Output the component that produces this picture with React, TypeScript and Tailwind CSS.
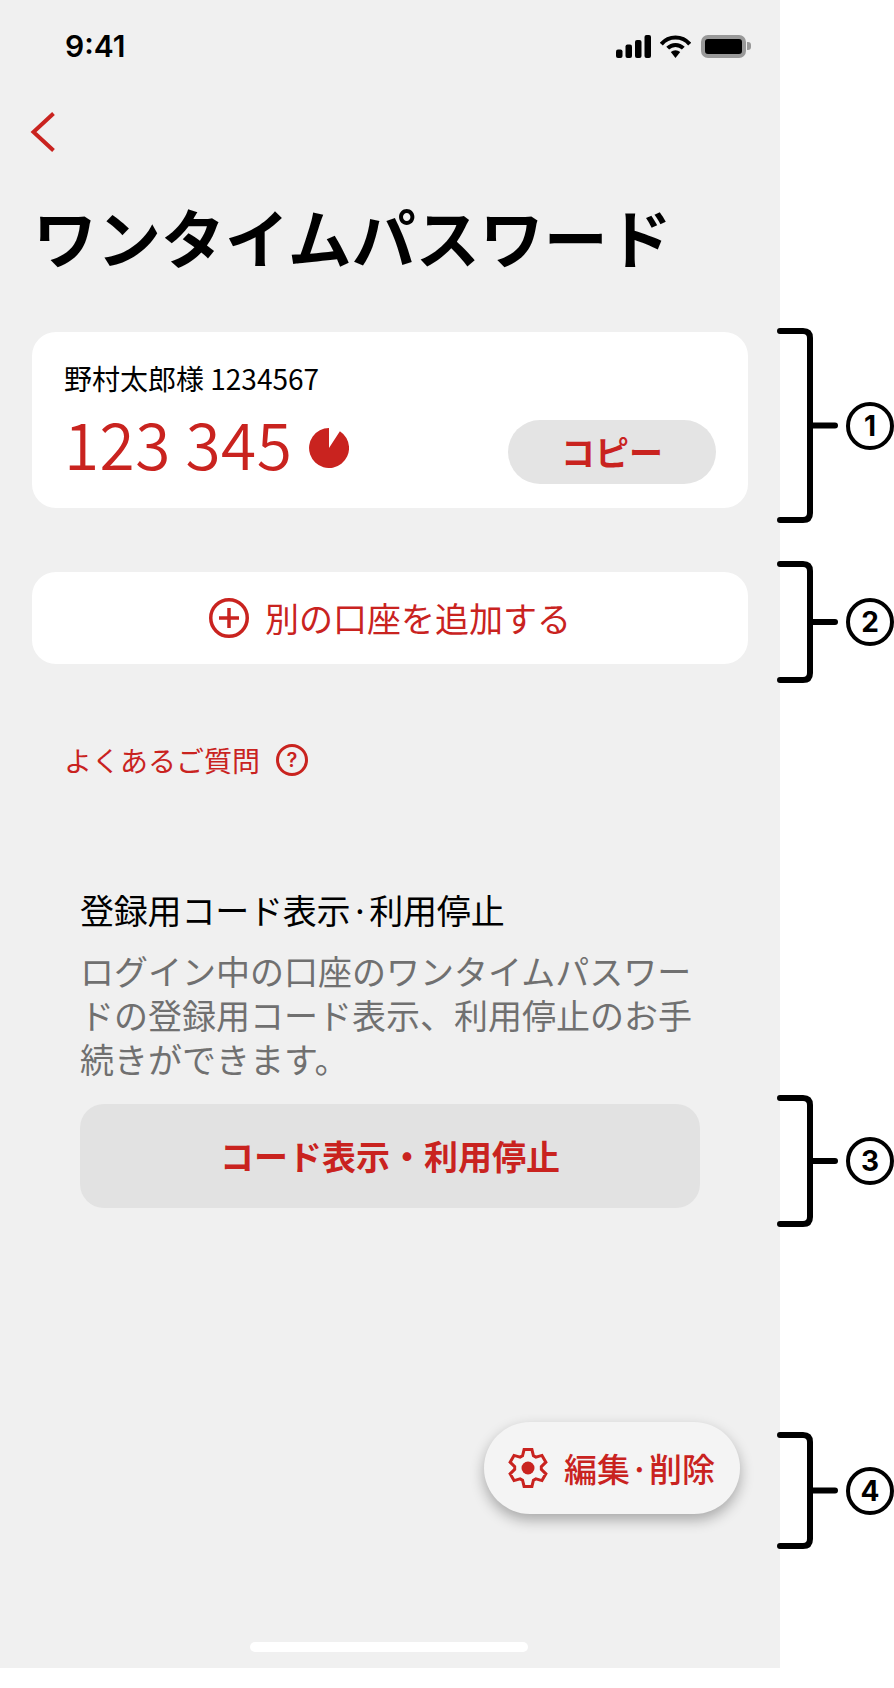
import React from "react"

const gearPath = (() => {
  const pts: string[] = []
  for (let k = 0; k < 6; k++) {
    const a = (k * 60 - 90) * (Math.PI / 180)
    const add = (offset: number, r: number) => {
      const t = a + offset * (Math.PI / 180)
      pts.push(`${(20 + r * Math.cos(t)).toFixed(2)},${(20 + r * Math.sin(t)).toFixed(2)}`)
    }
    add(-24, 13.4)
    add(-12, 18.8)
    add(12, 18.8)
    add(24, 13.4)
  }
  return pts.join(" ")
})()

function StatusIcons() {
  return (
    <div className="flex items-center">
      <svg width="35" height="23" viewBox="0 0 35 23" className="mr-[9px]" fill="#000">
        <rect x="0" y="14.5" width="6.5" height="8.5" rx="2" />
        <rect x="9.5" y="9.5" width="6.5" height="13.5" rx="2" />
        <rect x="19" y="5" width="6.5" height="18" rx="2" />
        <rect x="28.5" y="0" width="6.5" height="23" rx="2" />
      </svg>
      <svg width="31" height="23" viewBox="0 0 31 23" className="mr-[10px]" fill="none">
        <path d="M1.3 9.1 A18.5 18.5 0 0 1 29.7 9.1" stroke="#000" strokeWidth="4" />
        <path d="M7.7 13.2 A11 11 0 0 1 23.3 13.2" stroke="#000" strokeWidth="4" />
        <path d="M15.5 23 L10.8 17 A7 7 0 0 1 20.2 17 Z" fill="#000" />
      </svg>
      <div className="w-[45px] h-[23px] rounded-[7px] border-[4px] border-[#999999] bg-black" />
      <div className="w-[4px] h-[8px] ml-[1px] rounded-r-[3px] bg-[#999999]" />
    </div>
  )
}

function Callout({ num, className, height }: { num: number; className: string; height: number }) {
  const mid = height / 2
  return (
    <div className={`absolute left-[777px] w-[117px] flex items-center ${className}`} style={{ height }}>
      <svg width="62" height={height} viewBox={`0 0 62 ${height}`} fill="none" className="shrink-0">
        <path
          d={`M3 3 H26 Q33 3 33 10 V${height - 10} Q33 ${height - 3} 26 ${height - 3} H3`}
          stroke="#000"
          strokeWidth="6"
          strokeLinecap="round"
        />
        <path d={`M33 ${mid} H58`} stroke="#000" strokeWidth="6" strokeLinecap="round" />
      </svg>
      <div className="ml-[7px] w-[48px] h-[48px] shrink-0 rounded-full border-[4px] border-black flex items-center justify-center text-[28px] leading-none font-bold text-black font-['Inter',sans-serif]">
        {num}
      </div>
    </div>
  )
}

export default function App() {
  return (
    <div className="relative w-[894px] h-[1688px] bg-white font-['Noto_Sans_CJK_JP','Noto_Sans',sans-serif]">
      <div className="relative w-[780px] h-[1668px] bg-[#f0f0f0] flex flex-col">
        {/* Status bar */}
        <div className="h-[92px] pl-[65px] pr-[29px] flex items-center justify-between">
          <span className="text-[30px] leading-none font-semibold text-black font-['Inter',sans-serif]">9:41</span>
          <StatusIcons />
        </div>

        {/* Back */}
        <div className="mt-[19px] ml-[30px] h-[42px]">
          <svg width="26" height="42" viewBox="0 0 26 42" fill="none">
            <path d="M23.5 2.5 L3.5 21 L23.5 39.5" stroke="#c9231f" strokeWidth="4" />
          </svg>
        </div>

        <h1 className="mt-[42px] ml-[33px] text-[64px] leading-[80px] font-bold text-black">ワンタイムパスワード</h1>

        {/* Account card */}
        <div className="mt-[57px] mx-[32px] h-[176px] rounded-[24px] bg-white pt-[26px] px-[32px]">
          <div className="text-[28px] leading-[40px] text-black">野村太郎様 1234567</div>
          <div className="mt-[22px] flex items-center justify-between">
            <div className="flex items-center">
              <span className="text-[64px] leading-[64px] -mt-[20px] font-[350] tracking-[0.45px] text-[#c9231f]">123 345</span>
              <svg width="40" height="40" viewBox="0 0 40 40" className="ml-[17px] -mt-[8px]">
                <path d="M20 20 L20 0 A20 20 0 1 0 30.9 3.2 Z" fill="#c9231f" />
              </svg>
            </div>
            <button className="w-[208px] h-[64px] rounded-full bg-[#e4e4e4] text-[34px] leading-none font-bold text-[#c9231f]">
              コピー
            </button>
          </div>
        </div>

        {/* Add account */}
        <div className="mt-[64px] mx-[32px] h-[92px] rounded-[24px] bg-white flex items-center justify-center">
          <svg width="40" height="40" viewBox="0 0 40 40" fill="none" stroke="#c9231f" strokeWidth="3.5">
            <circle cx="20" cy="20" r="18.25" />
            <path d="M20 10 V30 M10 20 H30" />
          </svg>
          <span className="ml-[16px] text-[34px] leading-[40px] text-[#c9231f]">別の口座を追加する</span>
        </div>

        {/* FAQ */}
        <div className="mt-[76px] ml-[64px] h-[40px] flex items-center">
          <span className="text-[28px] leading-[40px] text-[#c9231f]">よくあるご質問</span>
          <svg width="32" height="32" viewBox="0 0 32 32" fill="none" className="ml-[16px]">
            <circle cx="16" cy="16" r="14.5" stroke="#c9231f" strokeWidth="3" />
            <text x="16" y="23" textAnchor="middle" fontSize="20" fontWeight="600" fill="#c9231f" fontFamily="Inter, sans-serif">?</text>
          </svg>
        </div>

        {/* Registration code */}
        <div className="mt-[106px] mx-[80px]">
          <h2 className="text-[34px] leading-[48px] font-normal text-black tracking-[-0.2px]">登録用コード表示·利用停止</h2>
          <p className="mt-[15px] text-[34px] leading-[44px] text-[#707070]">
            ログイン中の口座のワンタイムパスワードの登録用コード表示、利用停止のお手続きができます。
          </p>
          <button className="mt-[23px] w-full h-[104px] rounded-[24px] bg-[#e2e2e2] text-[34px] leading-none font-bold text-[#c9231f]">
            コード表示・利用停止
          </button>
        </div>

        {/* Floating edit button */}
        <div className="absolute left-[484px] top-[1422px] w-[256px] h-[92px] rounded-full bg-[#f4f4f4] shadow-[0_6px_14px_rgba(0,0,0,0.3)] flex items-center pl-[24px]">
          <svg width="40" height="40" viewBox="0 0 40 40" fill="none">
            <polygon points={gearPath} stroke="#c9231f" strokeWidth="3" strokeLinejoin="miter" />
            <circle cx="20" cy="20" r="6.5" fill="#c9231f" />
          </svg>
          <span className="ml-[16px] text-[33px] leading-[40px] font-medium text-[#c9231f]">編集·削除</span>
        </div>

        {/* Home indicator */}
        <div className="absolute left-[250px] top-[1642px] w-[278px] h-[10px] rounded-full bg-white" />
      </div>

      {/* Numbered annotations */}
      <Callout num={1} height={195} className="top-[328px]" />
      <Callout num={2} height={122} className="top-[561px]" />
      <Callout num={3} height={132} className="top-[1095px]" />
      <Callout num={4} height={117} className="top-[1432px]" />
    </div>
  )
}
